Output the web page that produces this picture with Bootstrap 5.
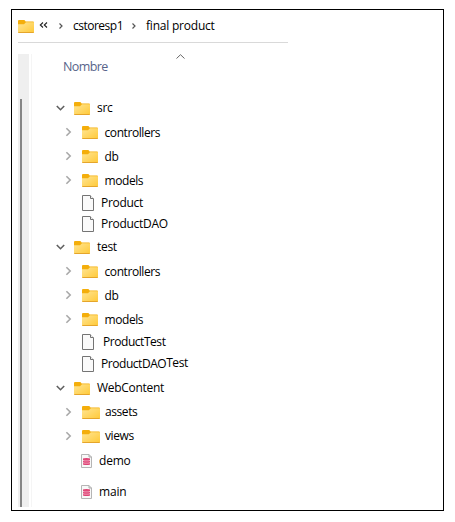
<!DOCTYPE html>
<html lang="es">
<head>
<meta charset="utf-8">
<meta name="viewport" content="width=device-width, initial-scale=1">
<title>final product</title>
<link href="https://cdn.jsdelivr.net/npm/bootstrap@5.3.0/dist/css/bootstrap.min.css" rel="stylesheet">
<style>
body{font-family:"Open Sans","Noto Sans",sans-serif;font-size:12px;line-height:16px;color:#000;background:#fff;height:522px;overflow:hidden;padding:9px 0 0 11px}
.explorer{width:433px;height:502px;border:1px solid #000;padding-left:6px}
.pathbar{width:270px;height:33px;border-bottom:1px solid #d9d9d9}
.pathbar span{white-space:nowrap;letter-spacing:-.22px}
.pathbar .parent-name{letter-spacing:-.5px}
.chevrons{width:9px;height:8px;margin:-3px 10px 0 5px}
.sep{width:6px;height:8px}
.sep-a{margin-right:9px}
.sep-b{margin:0 9px 0 8px}
.pane{margin-top:11px;height:453px}
.scroll{width:11px;background:#efefef;padding:45px 0 0 2px}
.thumb{width:2px;height:408px;background:#868686}
.tree{border-left:1px solid #f5f5f5;margin-left:2px;width:260px}
.heading{height:42px;padding-left:31px;font-size:12.5px;color:#58648a}
.heading span{width:113px;padding-top:5px;letter-spacing:-.6px}
.sort{width:9px;height:5px}
.entry{height:24px;padding-left:24px;letter-spacing:-.3px}
.entry span{white-space:nowrap}
.child{padding-left:32px;letter-spacing:-.42px}
.child span{padding-top:2px}
.wide span{padding-top:0}
.arrow{width:10px;height:10px;margin-right:8px;fill:none;stroke:#606060;stroke-width:1.6}
.child .arrow{stroke:#a8a8a8}
.folder{width:16px;height:13px;margin-right:7px}
.child .folder{margin-right:6.5px}
.wide .folder{width:18px;margin-right:5px}
.doc{padding-left:50px;height:22px}
.doc-low{height:21px;padding-bottom:1px}
.doc-high{height:23px;padding-bottom:1px}
.page-icon{width:12px;height:16px;margin-right:7px}
.data{padding-left:49px;height:25px;letter-spacing:-.2px}
.data-icon{width:11px;height:14px;margin-right:7px}
.last-entry{margin-top:6px}
.inset-name{padding-left:2px}
.tight{letter-spacing:-.45px}
.raised{position:relative;top:-1px}
</style>
<script src="https://cdn.jsdelivr.net/npm/bootstrap@5.3.0/dist/js/bootstrap.bundle.min.js"></script>
</head>
<body>
<svg width="0" height="0" class="position-absolute" aria-hidden="true">
<defs><linearGradient id="fill" x1="0" y1="0" x2="1" y2="1"><stop stop-color="#ffe594"/><stop offset="1" stop-color="#ffc937"/></linearGradient></defs>
<symbol id="folder" viewBox="0 0 16 13" preserveAspectRatio="none"><path d="M0 1Q0 0 1 0H6.2Q7 0 7.6 1.6H15Q16 1.6 16 2.6V6H0Z" fill="#f4ae0b"/><path d="M0 4.2H6L8 2.2H16V12Q16 13 15 13H1Q0 13 0 12Z" fill="url(#fill)"/><path d="M.3 12.5H15.7" stroke="#e5a52b"/></symbol>
<symbol id="page" viewBox="0 0 12 16"><path d="M.5.5H8L11.5 4V15.5H.5Z" fill="#fafafa" stroke="#747474"/><path d="M8.5 .5V3.5H11.5" fill="#eee" stroke="#747474"/></symbol>
<symbol id="data" viewBox="0 0 11 14"><path d="M.5.5H8L10.5 3V13.5H.5Z" fill="#f8f8f8" stroke="#b5b5b5"/><path d="M8 .5V3H10.5" fill="none" stroke="#aaa"/><path d="M2 4.6Q5.5 3.4 9 4.6V6Q5.5 7 2 6ZM2 6.9Q5.5 7.7 9 6.9V8.3Q5.5 9.3 2 8.3ZM2 9.2Q5.5 10 9 9.2V10.5Q5.5 11.7 2 10.5Z" fill="#dc3f70"/><path d="M2.3 4.6H8.7V10.6H2.3Z" fill="#e65584" fill-opacity=".45"/></symbol>
<symbol id="down" viewBox="0 0 10 10"><path d="M.8 3L4.5 6.7L8.2 3"/></symbol>
<symbol id="right" viewBox="0 0 10 10"><path d="M2.4 1.2L6.2 5L2.4 8.8"/></symbol>
<symbol id="next" viewBox="0 0 6 8"><path d="M1.5 1.5L4 4L1.5 6.5" fill="none" stroke="#555" stroke-width="1.2"/></symbol>
</svg>
<main class="explorer">
<nav class="pathbar d-flex align-items-center" aria-label="Ruta">
<svg class="folder me-0"><use href="#folder"/></svg>
<svg class="chevrons" viewBox="0 0 9 8" fill="none" stroke="#222" stroke-width="1.1"><path d="M4 1.5L1.3 4L4 6.5M8 1.5L5.3 4L8 6.5"/></svg>
<svg class="sep sep-a"><use href="#next"/></svg>
<span class="parent-name">cstoresp1</span>
<svg class="sep sep-b"><use href="#next"/></svg>
<span>final product</span>
</nav>
<div class="pane d-flex">
<div class="scroll"><div class="thumb"></div></div>
<div class="tree d-flex flex-column">
<div class="heading d-flex"><span>Nombre</span><svg class="sort" viewBox="0 0 9 5" fill="none" stroke="#666"><path d="M.5 4.5L4.5.7L8.5 4.5"/></svg></div>
<div class="entry d-flex align-items-center"><svg class="arrow"><use href="#down"/></svg><svg class="folder"><use href="#folder"/></svg><span>src</span></div>
<div class="entry child d-flex align-items-center"><svg class="arrow"><use href="#right"/></svg><svg class="folder"><use href="#folder"/></svg><span>controllers</span></div>
<div class="entry child d-flex align-items-center"><svg class="arrow"><use href="#right"/></svg><svg class="folder"><use href="#folder"/></svg><span>db</span></div>
<div class="entry child d-flex align-items-center"><svg class="arrow"><use href="#right"/></svg><svg class="folder"><use href="#folder"/></svg><span>models</span></div>
<div class="entry doc d-flex align-items-center"><svg class="page-icon"><use href="#page"/></svg><span>Product</span></div>
<div class="entry doc doc-low d-flex align-items-center"><svg class="page-icon"><use href="#page"/></svg><span>ProductDAO</span></div>
<div class="entry d-flex align-items-center"><svg class="arrow"><use href="#down"/></svg><svg class="folder"><use href="#folder"/></svg><span>test</span></div>
<div class="entry child d-flex align-items-center"><svg class="arrow"><use href="#right"/></svg><svg class="folder"><use href="#folder"/></svg><span>controllers</span></div>
<div class="entry child d-flex align-items-center"><svg class="arrow"><use href="#right"/></svg><svg class="folder"><use href="#folder"/></svg><span>db</span></div>
<div class="entry child d-flex align-items-center"><svg class="arrow"><use href="#right"/></svg><svg class="folder"><use href="#folder"/></svg><span>models</span></div>
<div class="entry doc d-flex align-items-center"><svg class="page-icon"><use href="#page"/></svg><span class="inset-name tight">ProductTest</span></div>
<div class="entry doc doc-high d-flex align-items-center"><svg class="page-icon"><use href="#page"/></svg><span class="tight">ProductDAO<span class="raised">Test</span></span></div>
<div class="entry d-flex align-items-center"><svg class="arrow"><use href="#down"/></svg><svg class="folder"><use href="#folder"/></svg><span>WebContent</span></div>
<div class="entry child wide d-flex align-items-center"><svg class="arrow"><use href="#right"/></svg><svg class="folder"><use href="#folder"/></svg><span>assets</span></div>
<div class="entry child wide d-flex align-items-center"><svg class="arrow"><use href="#right"/></svg><svg class="folder"><use href="#folder"/></svg><span>views</span></div>
<div class="entry data d-flex align-items-center"><svg class="data-icon"><use href="#data"/></svg><span>demo</span></div>
<div class="entry data last-entry d-flex align-items-center"><svg class="data-icon"><use href="#data"/></svg><span>main</span></div>
</div>
</div>
</main>
</body>
</html>
